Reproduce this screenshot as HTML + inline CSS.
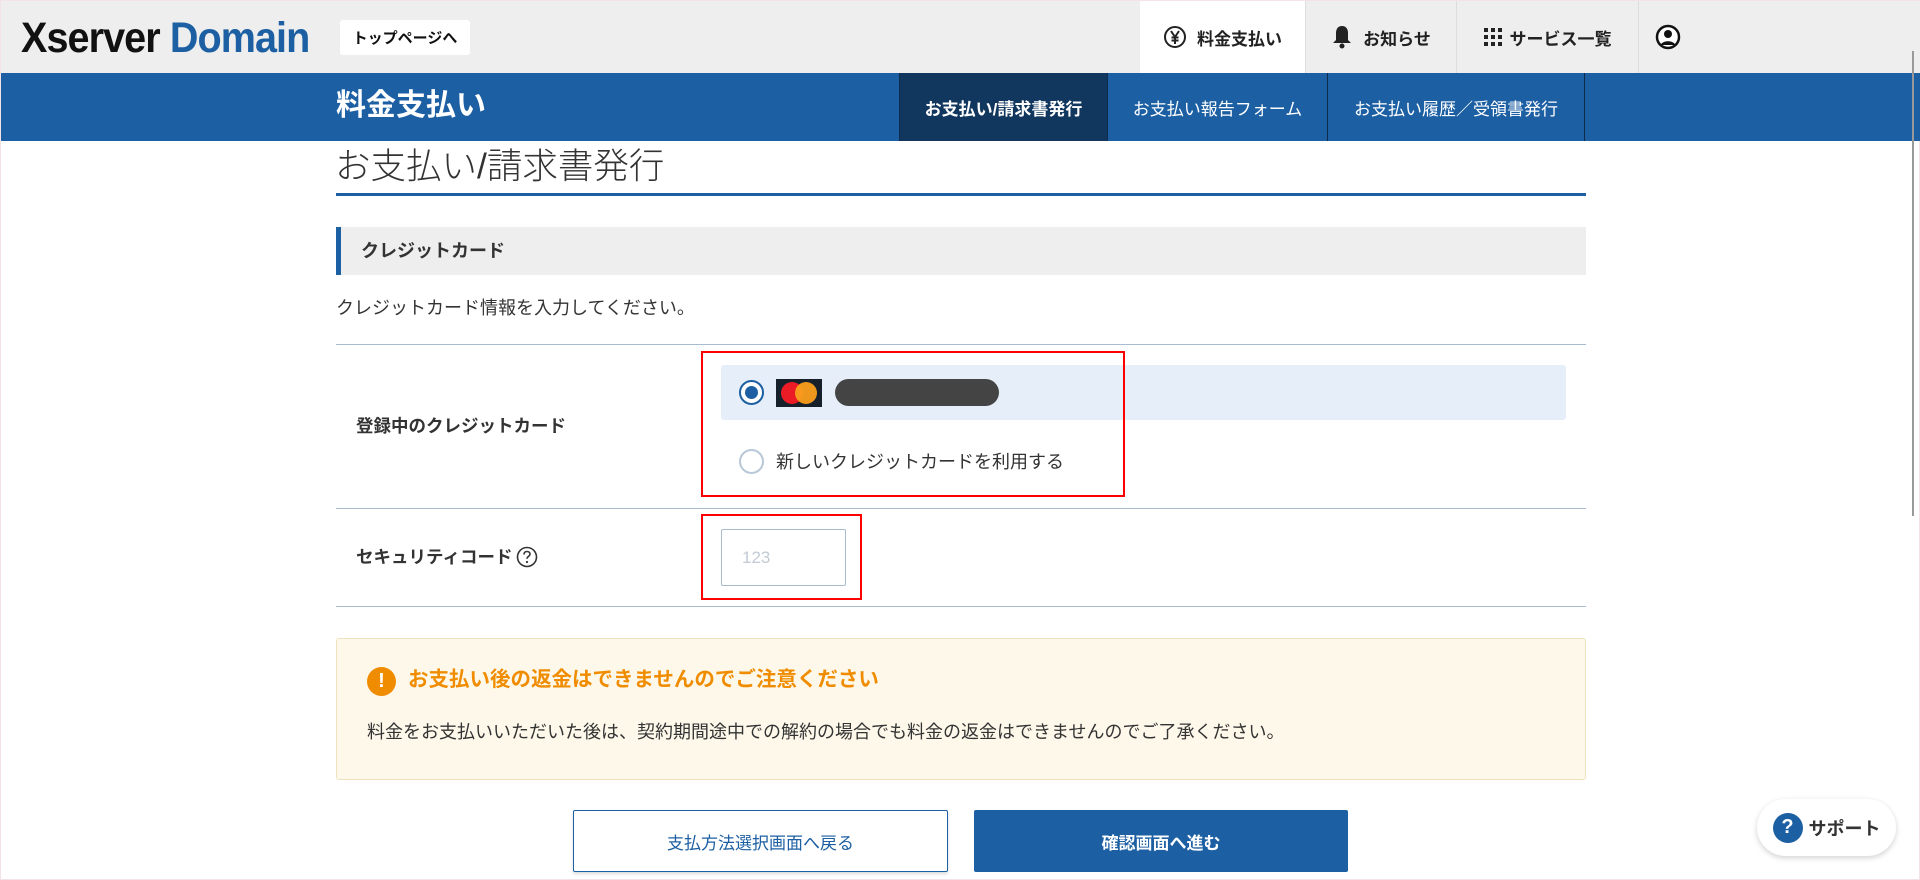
<!DOCTYPE html>
<html><head><meta charset="utf-8"><style>
*{box-sizing:border-box;margin:0;padding:0}
body{width:1920px;height:880px;overflow:hidden;background:#fff;font-family:"Liberation Sans","Noto Sans CJK JP",sans-serif;color:#333;position:relative;border:1px solid #f3e3e6}
.a{position:absolute}
.top{left:0;top:0;width:1920px;height:72px;background:#eee}
.blue{left:0;top:72px;width:1920px;height:68px;background:#1c5fa3}
.c{display:flex;align-items:center;justify-content:center}
.nav{top:72px;height:68px;color:#fff;font-size:17px;border-left:1px solid #0d2c4d}
.radio{width:25px;height:25px;border-radius:50%;border:2px solid #b8c8d8;background:#fff}
.line{left:335px;width:1250px;height:1px;background:#a9bccd}
</style></head><body>
<div class="a top"></div>
<div class="a" style="left:20px;top:12px;font-size:43px;font-weight:bold;letter-spacing:-1px;line-height:50px;transform:scaleX(0.92);transform-origin:left;white-space:nowrap"><span style="color:#111">Xserver</span> <span style="color:#1c5fa3">Domain</span></div>
<div class="a c" style="left:339px;top:19px;width:130px;height:35px;background:#fff;border-radius:3px;font-size:15px;color:#111;font-weight:bold">トップページへ</div>
<div class="a c" style="left:1139px;top:0;width:166px;height:72px;background:#fff;font-size:17px;font-weight:bold;color:#222;border-right:1px solid #ddd">
<svg width="24" height="24" viewBox="0 0 24 24" style="margin-right:10px"><circle cx="12" cy="12" r="10" fill="none" stroke="#222" stroke-width="2"/><path d="M8 6l4 6 4-6M12 12v7M8.5 12.5h7M8.5 15.5h7" fill="none" stroke="#222" stroke-width="2"/></svg>料金支払い</div>
<div class="a c" style="left:1305px;top:0;width:151px;height:72px;font-size:17px;font-weight:bold;color:#222;border-right:1px solid #ddd">
<svg width="22" height="26" viewBox="0 0 22 26" style="margin-right:10px"><path d="M11 2c-4 0-6 3-6 7v7l-3 3h18l-3-3V9c0-4-2-7-6-7z" fill="#222"/><circle cx="11" cy="22" r="2.5" fill="#222"/></svg>お知らせ</div>
<div class="a c" style="left:1456px;top:0;width:182px;height:72px;font-size:17px;font-weight:bold;color:#222;border-right:1px solid #ddd">
<svg width="18" height="18" viewBox="0 0 18 18" style="margin-right:8px" fill="#222"><rect x="0" y="0" width="4" height="4"/><rect x="7" y="0" width="4" height="4"/><rect x="14" y="0" width="4" height="4"/><rect x="0" y="7" width="4" height="4"/><rect x="7" y="7" width="4" height="4"/><rect x="14" y="7" width="4" height="4"/><rect x="0" y="14" width="4" height="4"/><rect x="7" y="14" width="4" height="4"/><rect x="14" y="14" width="4" height="4"/></svg>サービス一覧</div>
<svg class="a" style="left:1654px;top:23px" width="26" height="26" viewBox="0 0 26 26"><circle cx="13" cy="13" r="11" fill="#fff" stroke="#111" stroke-width="2.5"/><circle cx="13" cy="10" r="4" fill="#111"/><path d="M5.5 21c2-5 13-5 15 0" fill="#111"/></svg>
<div class="a blue"></div>
<div class="a" style="left:1911px;top:50px;width:2px;height:465px;background:#999"></div>
<div class="a" style="left:335px;top:85px;font-size:30px;font-weight:bold;color:#fff;line-height:40px">料金支払い</div>
<div class="a c nav" style="left:898px;width:208px;background:#12375e;font-weight:bold">お支払い/請求書発行</div>
<div class="a c nav" style="left:1106px;width:220px">お支払い報告フォーム</div>
<div class="a c nav" style="left:1326px;width:258px;border-right:1px solid #0d2c4d">お支払い履歴／受領書発行</div>
<div class="a" style="left:334px;top:143px;font-size:35.5px;color:#333;line-height:44px;font-weight:300">お支払い/請求書発行</div>
<div class="a" style="left:335px;top:192px;width:1250px;height:3px;background:#1c5fa3"></div>
<div class="a" style="left:335px;top:226px;width:1250px;height:48px;background:#eee;border-left:5px solid #1c5fa3;font-size:18px;font-weight:bold;line-height:48px;padding-left:20px">クレジットカード</div>
<div class="a" style="left:335px;top:295px;font-size:18px;line-height:24px">クレジットカード情報を入力してください。</div>
<div class="a line" style="top:343px"></div>
<div class="a line" style="top:507px"></div>
<div class="a line" style="top:605px"></div>
<div class="a" style="left:355px;top:413px;font-size:17.5px;font-weight:bold;line-height:24px">登録中のクレジットカード</div>
<div class="a" style="left:355px;top:545px;font-size:17.5px;font-weight:bold;line-height:22px;display:flex;align-items:center">セキュリティコード<svg width="22" height="22" viewBox="0 0 22 22" style="margin-left:4px"><circle cx="11" cy="11" r="9.5" fill="none" stroke="#333" stroke-width="1.6"/><path d="M8 8.5c0-2 1.3-3 3-3s3 1 3 2.7c0 2-3 2.3-3 4.5" fill="none" stroke="#333" stroke-width="1.6"/><circle cx="11" cy="16" r="1.1" fill="#333"/></svg></div>
<div class="a" style="left:720px;top:364px;width:845px;height:55px;background:#e6eff9;border-radius:3px"></div>
<div class="a radio" style="left:738px;top:379px;border-color:#1c5fa3;display:flex;align-items:center;justify-content:center"><div style="width:13px;height:13px;border-radius:50%;background:#1c5fa3"></div></div>
<div class="a" style="left:775px;top:378px;width:46px;height:28px;background:#16202b"></div>
<div class="a" style="left:780px;top:381px;width:22px;height:22px;border-radius:50%;background:#eb1c26"></div>
<div class="a" style="left:794px;top:381px;width:22px;height:22px;border-radius:50%;background:#f99f1b;opacity:.95"></div>
<div class="a" style="left:834px;top:378px;width:164px;height:27px;border-radius:14px;background:#444"></div>
<div class="a radio" style="left:738px;top:448px"></div>
<div class="a" style="left:775px;top:448px;font-size:18px;line-height:26px">新しいクレジットカードを利用する</div>
<div class="a" style="left:700px;top:350px;width:424px;height:146px;border:2px solid #f00"></div>
<div class="a" style="left:720px;top:528px;width:125px;height:57px;border:1px solid #a9bccd;border-radius:2px;font-size:17px;color:#c2cbd5;line-height:55px;padding-left:20px">123</div>
<div class="a" style="left:700px;top:513px;width:161px;height:86px;border:2px solid #f00"></div>
<div class="a" style="left:335px;top:637px;width:1250px;height:142px;background:#fdf8ea;border:1px solid #efe3bf;border-radius:3px"></div>
<div class="a c" style="left:366px;top:666px;width:29px;height:29px;border-radius:50%;background:#f08c00;color:#fff;font-weight:bold;font-size:20px">!</div>
<div class="a" style="left:407px;top:665px;font-size:20.5px;font-weight:bold;color:#f08c00;line-height:28px">お支払い後の返金はできませんのでご注意ください</div>
<div class="a" style="left:366px;top:718px;font-size:18px;line-height:26px">料金をお支払いいただいた後は、契約期間途中での解約の場合でも料金の返金はできませんのでご了承ください。</div>
<div class="a c" style="left:572px;top:809px;width:375px;height:62px;border:1px solid #1c5fa3;border-radius:2px;color:#1c5fa3;font-size:17px;box-shadow:0 2px 3px rgba(0,0,0,.15)">支払方法選択画面へ戻る</div>
<div class="a c" style="left:973px;top:809px;width:374px;height:62px;background:#1c5fa3;border-radius:2px;color:#fff;font-size:17px;font-weight:bold">確認画面へ進む</div>
<div class="a c" style="left:1756px;top:798px;width:139px;height:57px;background:#fff;border-radius:29px;box-shadow:0 2px 6px rgba(0,0,0,.18);font-size:18px;font-weight:bold;color:#333"><span class="c" style="width:30px;height:30px;border-radius:50%;background:#1c5fa3;color:#fff;font-size:20px;margin-right:6px">?</span>サポート</div>
</body></html>
